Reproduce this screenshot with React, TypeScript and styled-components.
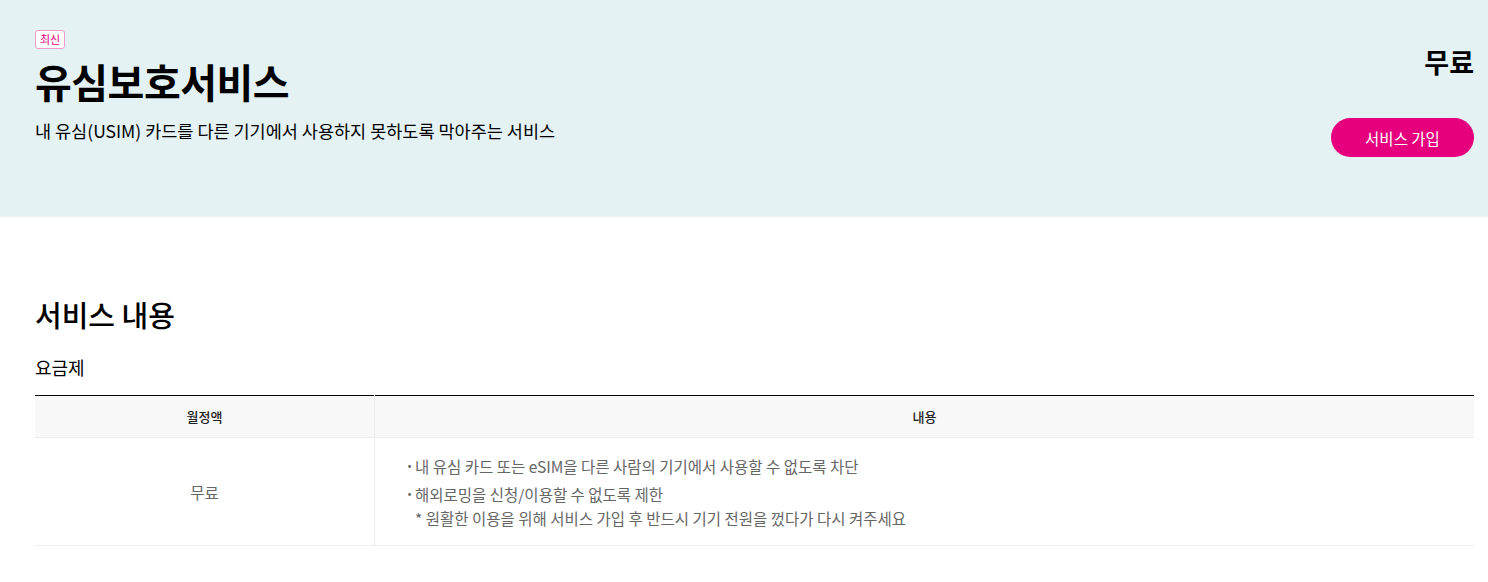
import styled, { createGlobalStyle } from 'styled-components';

const GlobalStyle = createGlobalStyle`
  body {
    margin: 0;
    font-family: "Noto Sans CJK KR", "Noto Sans", sans-serif;
    color: #000;
    background: #fff;
  }
`;

const Hero = styled.section`
  background: #e4f2f4;
  height: 217px;
  box-sizing: border-box;
  padding: 30px 14px 0 35px;
  display: flex;
  justify-content: space-between;
`;

const HeroLeft = styled.div`
  display: flex;
  flex-direction: column;
  align-items: flex-start;
`;

const Badge = styled.span`
  display: inline-block;
  border: 1px solid #f29ac8;
  border-radius: 3px;
  background: #fff;
  color: #e6007e;
  font-size: 11px;
  line-height: 17px;
  padding: 0 4px;
`;

const Title = styled.h1`
  margin: 4px 0 0;
  font-size: 40px;
  font-weight: 700;
  line-height: 56px;
  letter-spacing: -0.5px;
`;

const Subtitle = styled.p`
  margin: 10px 0 0;
  font-size: 17.5px;
  line-height: 24px;
`;

const HeroRight = styled.div`
  display: flex;
  flex-direction: column;
  align-items: flex-end;
`;

const Price = styled.div`
  margin-top: 14px;
  font-size: 27px;
  font-weight: 700;
  line-height: 36px;
`;

const JoinButton = styled.button`
  margin-top: 38px;
  width: 143px;
  height: 39px;
  border: none;
  border-radius: 20px;
  background: #e6007e;
  color: #fff;
  font-family: inherit;
  font-size: 15.5px;
  cursor: pointer;
`;

const Content = styled.section`
  padding: 77px 14px 0 35px;
`;

const SectionTitle = styled.h2`
  margin: 0;
  font-size: 29px;
  font-weight: 500;
  line-height: 40px;
`;

const SubTitle = styled.h3`
  margin: 20px 0 0;
  font-size: 18px;
  font-weight: 400;
  line-height: 26px;
`;

const Table = styled.table`
  margin-top: 15px;
  width: 100%;
  border-collapse: collapse;
  border-top: 1px solid #000;
`;

const Th = styled.th<{ $w?: number }>`
  width: ${(p) => (p.$w ? `${p.$w}px` : 'auto')};
  height: 41px;
  padding: 0;
  background: #f8f8f8;
  font-size: 13px;
  font-weight: 500;
  color: #222;
  border-bottom: 1px solid #eee;
  & + & {
    border-left: 1px solid #eee;
  }
`;

const Td = styled.td<{ $center?: boolean }>`
  height: 108px;
  text-align: ${(p) => (p.$center ? 'center' : 'left')};
  padding: ${(p) => (p.$center ? '0' : '14px 0 14px 30px')};
  font-size: 15.5px;
  color: #666;
  border-bottom: 1px solid #eee;
  box-sizing: border-box;
  & + & {
    border-left: 1px solid #eee;
  }
`;

const List = styled.ul`
  margin: 0;
  padding: 0;
  list-style: none;
`;

const Item = styled.li`
  position: relative;
  padding-left: 10px;
  line-height: 24px;
  & + & {
    margin-top: 4px;
  }
  &::before {
    content: '·';
    position: absolute;
    left: 0;
    top: -1px;
    font-weight: 700;
  }
`;

const Note = styled.div`
  padding-left: 0;
`;

export default function App() {
  return (
    <>
      <GlobalStyle />
      <Hero>
        <HeroLeft>
          <Badge>최신</Badge>
          <Title>유심보호서비스</Title>
          <Subtitle>내 유심(USIM) 카드를 다른 기기에서 사용하지 못하도록 막아주는 서비스</Subtitle>
        </HeroLeft>
        <HeroRight>
          <Price>무료</Price>
          <JoinButton>서비스 가입</JoinButton>
        </HeroRight>
      </Hero>
      <Content>
        <SectionTitle>서비스 내용</SectionTitle>
        <SubTitle>요금제</SubTitle>
        <Table>
          <thead>
            <tr>
              <Th $w={339}>월정액</Th>
              <Th>내용</Th>
            </tr>
          </thead>
          <tbody>
            <tr>
              <Td $center>무료</Td>
              <Td>
                <List>
                  <Item>내 유심 카드 또는 eSIM을 다른 사람의 기기에서 사용할 수 없도록 차단</Item>
                  <Item>
                    해외로밍을 신청/이용할 수 없도록 제한
                    <Note>* 원활한 이용을 위해 서비스 가입 후 반드시 기기 전원을 껐다가 다시 켜주세요</Note>
                  </Item>
                </List>
              </Td>
            </tr>
          </tbody>
        </Table>
      </Content>
    </>
  );
}
